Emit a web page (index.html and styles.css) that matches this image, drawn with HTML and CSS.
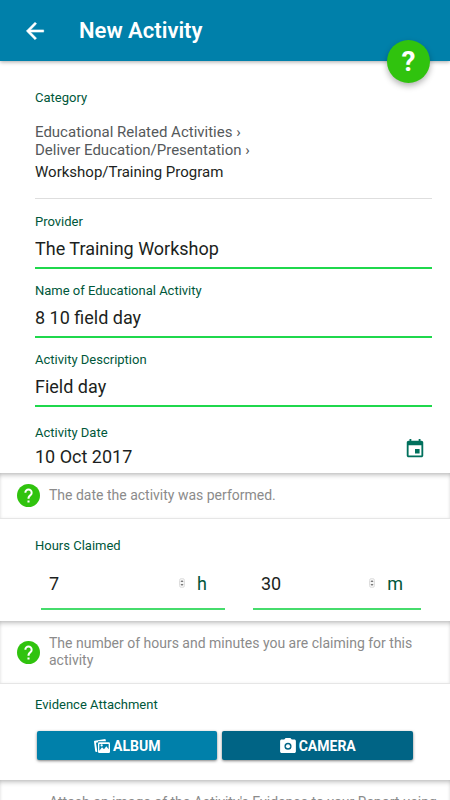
FILE: index.html
```html
<!DOCTYPE html>
<html lang="en">
<head>
<meta charset="utf-8">
<meta name="viewport" content="width=device-width, initial-scale=1">
<title>New Activity</title>
<link rel="stylesheet" href="styles.css">
</head>
<body>
<header class="topbar">
  <button class="back" type="button" aria-label="Back">
    <svg viewBox="0 0 24 24" width="26" height="26"><path fill="currentColor" stroke="currentColor" stroke-width=".5" d="M20 11H7.830l5.590-5.590L12 4l-8 8 8 8 1.410-1.410L7.830 13H20z"/></svg>
  </button>
  <h1 class="title">New Activity</h1>
  <button class="help-fab" type="button" aria-label="Help">?</button>
</header>

<form class="form">
  <section class="panel details">
    <h2 class="label">Category</h2>
    <div class="category">
      <p class="crumb">Educational Related Activities ›</p>
      <p class="crumb">Deliver Education/Presentation ›</p>
      <p class="crumb current">Workshop/Training Program</p>
    </div>
    <div class="field">
      <label class="label" for="provider">Provider</label>
      <input class="text-input" id="provider" type="text" value="The Training Workshop">
    </div>
    <div class="field">
      <label class="label" for="name">Name of Educational Activity</label>
      <input class="text-input" id="name" type="text" value="8 10 field day">
    </div>
    <div class="field">
      <label class="label" for="description">Activity Description</label>
      <input class="text-input" id="description" type="text" value="Field day">
    </div>
    <div class="date-row">
      <div class="date-text">
        <label class="label" for="date">Activity Date</label>
        <input class="date-input" id="date" type="text" value="10 Oct 2017">
      </div>
      <button class="calendar" type="button" aria-label="Choose date">
        <svg viewBox="0 0 24 24" width="22" height="22"><path fill="currentColor" d="M17 12h-5v5h5v-5zM16 1v2H8V1H6v2H5c-1.110 0-1.990.9-1.990 2L3 19c0 1.100.89 2 2 2h14c1.100 0 2-.9 2-2V5c0-1.100-.9-2-2-2h-1V1h-2zm3 18H5V8h14v11z"/></svg>
      </button>
    </div>
  </section>

  <aside class="hint">
    <svg class="hint-icon" viewBox="2 2 20 20"><use href="#question"/></svg>
    <p>The date the activity was performed.</p>
  </aside>

  <section class="panel hours">
    <h2 class="label">Hours Claimed</h2>
    <div class="time-row">
      <div class="time wide">
        <input class="number" id="hours" type="number" value="7">
        <svg class="spinner" viewBox="0 0 6 10"><rect x=".5" y=".5" width="5" height="9" rx="2" fill="#f4f4f4" stroke="#dedede"/><path fill="#777" d="M1.500 4 3 2l1.500 2zM1.500 6 3 8l1.500-2z"/></svg>
        <label class="unit" for="hours">h</label>
      </div>
      <div class="time">
        <input class="number" id="minutes" type="number" value="30">
        <svg class="spinner" viewBox="0 0 6 10"><rect x=".5" y=".5" width="5" height="9" rx="2" fill="#f4f4f4" stroke="#dedede"/><path fill="#777" d="M1.500 4 3 2l1.500 2zM1.500 6 3 8l1.500-2z"/></svg>
        <label class="unit" for="minutes">m</label>
      </div>
    </div>
  </section>

  <aside class="hint">
    <svg class="hint-icon" viewBox="2 2 20 20"><use href="#question"/></svg>
    <p>The number of hours and minutes you are claiming for this activity</p>
  </aside>

  <section class="panel evidence">
    <h2 class="label">Evidence Attachment</h2>
    <div class="actions">
      <button class="action album" type="button">
        <svg viewBox="0 0 24 24" width="16" height="16"><path fill="currentColor" fill-rule="evenodd" d="M1 4 17 1.500 18 5H6v1.500L3 7l2 13.500-1.500.5Q2 21 1.800 19.500L0 5.500Q0 4.200 1 4zM8 6.500h14q2 0 2 2v12q0 2-2 2H8q-2 0-2-2v-12q0-2 2-2zm0 2.500v10l4-5 3 3 3.500-4.500L22 17V9zm3.500.5a1.700 1.700 0 1 1 0 3.400 1.700 1.700 0 0 1 0-3.400z"/></svg>
        <span>ALBUM</span>
      </button>
      <button class="action camera" type="button">
        <svg viewBox="2 2 20 19" width="16" height="15"><path fill="currentColor" fill-rule="evenodd" d="M9 2 7.200 4H4c-1.100 0-2 .9-2 2v13c0 1.100.9 2 2 2h16c1.100 0 2-.9 2-2V6c0-1.100-.9-2-2-2h-3.200L15 2H9zm3 6a4.500 4.500 0 1 1 0 9 4.500 4.500 0 0 1 0-9z"/><circle cx="12" cy="12.500" r="2.600" fill="currentColor"/></svg>
        <span>CAMERA</span>
      </button>
    </div>
  </section>

  <aside class="hint">
    <svg class="hint-icon" viewBox="2 2 20 20"><use href="#question"/></svg>
    <p>Attach an image of the Activity's Evidence to your Report using the album or camera</p>
  </aside>
</form>

<svg class="symbols" width="0" height="0" aria-hidden="true">
  <defs>
    <g id="question"><circle cx="12" cy="12" r="10" fill="#30c30e"/><path fill="#fff" d="M11.100 16.300h1.800v1.800h-1.800zM12 6a3.600 3.600 0 0 0-3.600 3.600h1.700a1.900 1.900 0 1 1 3.800 0c0 1.900-2.800 1.800-2.800 5.200h1.800c0-2.200 2.700-2.500 2.700-5.200A3.600 3.600 0 0 0 12 6z"/></g>
  </defs>
</svg>
</body>
</html>
```
FILE: styles.css
```css
* {
  box-sizing: border-box;
}

html {
  scrollbar-width: none;
}

body {
  margin: 0;
  background: #fff;
  color: #1c1f21;
  font-family: Roboto, "Liberation Sans", sans-serif;
  font-size: 14px;
}

h1, h2, p {
  margin: 0;
  font-weight: 400;
}

button, input {
  font: inherit;
  color: inherit;
  border: 0;
  margin: 0;
  padding: 0;
  background: none;
  border-radius: 0;
}

button {
  cursor: pointer;
}

input {
  min-width: 0;
  outline: none;
}

svg {
  display: block;
  flex: none;
}

.topbar {
  position: relative;
  display: flex;
  align-items: center;
  gap: 31px;
  height: 61px;
  padding: 0 22px;
  background: #0080aa;
  color: #fff;
  box-shadow: 0 1px 4px rgba(0, 0, 0, 0.35);
}

.title {
  font-size: 22px;
  line-height: 26px;
  font-weight: 600;
}

.help-fab {
  position: absolute;
  right: 20px;
  bottom: -22px;
  width: 43px;
  height: 43px;
  border-radius: 50%;
  background: #30c30e;
  color: #fff;
  font-size: 28px;
  line-height: 43px;
  font-weight: 700;
  box-shadow: 0 3px 6px rgba(0, 0, 0, 0.3);
}

.panel {
  padding: 0 18px 0 35px;
}

.label {
  display: block;
  color: #00573a;
  font-size: 13px;
  line-height: 16px;
}

.details {
  padding-top: 29px;
}

.category {
  padding: 17px 0;
  margin-bottom: 15px;
  border-bottom: 1px solid #dedede;
}

.crumb {
  color: #55595b;
  font-size: 15px;
  line-height: 18px;
}

.current {
  margin-top: 4px;
  color: #1c1f21;
}

.field {
  margin-bottom: 14px;
}

.text-input {
  display: block;
  width: 100%;
  height: 39px;
  border-bottom: 2px solid #1fd84c;
  font-size: 18px;
}

.date-row {
  display: flex;
  align-items: center;
  justify-content: space-between;
  margin-top: 18px;
  padding: 0 6px 1px 0;
}

.date-text {
  flex: 1;
}

.date-input {
  display: block;
  width: 100%;
  height: 31px;
  font-size: 18px;
}

.calendar {
  color: #00705c;
}

.hint {
  display: flex;
  align-items: center;
  gap: 9px;
  padding: 14px 8px 14px 17px;
  border-bottom: 1px solid #e6e6e6;
  color: #8b8b8b;
  line-height: 17px;
  box-shadow: inset 0 4px 5px -2px rgba(0, 0, 0, 0.25), inset 0 0 3px rgba(0, 0, 0, 0.06);
}

.hint-icon {
  width: 23px;
  height: 23px;
  margin: -3px 0;
}

.hours {
  padding-top: 19px;
  padding-bottom: 11px;
}

.time-row {
  display: flex;
  gap: 28px;
  padding: 8px 11px 0 6px;
}

.time {
  display: flex;
  flex: 9;
  align-items: center;
  min-width: 0;
  height: 48px;
  padding: 0 18px 4px 8px;
  border-bottom: 2px solid #46dc6c;
  font-size: 18px;
}

.wide {
  flex: 10;
}

.number {
  flex: 1;
  width: 0;
  appearance: textfield;
}

.number::-webkit-inner-spin-button {
  display: none;
}

.spinner {
  width: 6px;
  height: 10px;
  margin-right: 12px;
}

.unit {
  color: #00573a;
}

.evidence {
  padding-top: 13px;
  padding-bottom: 20px;
}

.actions {
  display: flex;
  gap: 5px;
  padding: 18px 19px 0 2px;
}

.action {
  display: flex;
  flex: 18;
  align-items: center;
  justify-content: center;
  gap: 3px;
  height: 29px;
  border-radius: 2px;
  color: #fff;
  font-weight: 700;
  box-shadow: 0 1px 3px rgba(0, 0, 0, 0.5);
}

.album {
  background: #0080aa;
}

.camera {
  flex: 19;
  background: #006485;
}

.symbols {
  position: absolute;
}
```
